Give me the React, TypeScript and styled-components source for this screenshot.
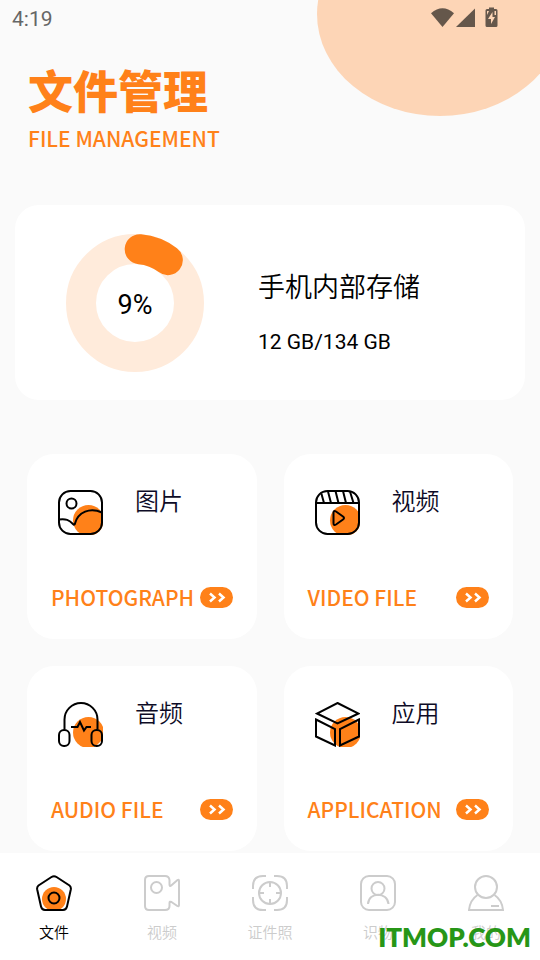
import React from "react";
import styled, { createGlobalStyle } from "styled-components";

const ORANGE = "#ff8119";

const GlobalStyle = createGlobalStyle`
  *, *::before, *::after { box-sizing: border-box; }
  body {
    margin: 0;
    background: #fafafa;
    color: #000;
    font-family: Roboto, "Noto Sans CJK SC", sans-serif;
  }
`;

const Screen = styled.div`
  position: relative;
  min-height: 100vh;
  display: flex;
  flex-direction: column;
  overflow: hidden;
`;

const Blob = styled.div`
  position: absolute;
  top: -88px;
  right: -23px;
  width: 246px;
  height: 204px;
  border-radius: 50%;
  background: #fdd5b6;
`;

const StatusBar = styled.div`
  position: relative;
  display: flex;
  justify-content: space-between;
  align-items: center;
  height: 36px;
  padding: 0 40px 0 12px;
`;

const Clock = styled.time`
  padding-top: 2px;
  font-size: 21px;
  line-height: 24px;
  color: #666;
`;

const StatusIcons = styled.div`
  display: flex;
  align-items: center;
  padding-bottom: 2px;
`;

const Header = styled.header`
  position: relative;
  padding: 28px 28px 0;
`;

const Title = styled.h1`
  margin: 0;
  font-family: "Noto Sans CJK SC", sans-serif;
  font-size: 45px;
  line-height: 52px;
  font-weight: 900;
  color: ${ORANGE};
`;

const Caption = styled.p`
  margin: 0;
  font-family: "Noto Sans CJK SC", sans-serif;
  font-size: 21px;
  line-height: 28px;
  font-weight: 500;
  color: ${ORANGE};
  white-space: nowrap;
`;

const Subtitle = styled(Caption)`
  margin-top: 8px;
`;

const Main = styled.main`
  flex: 1;
  display: flex;
  flex-direction: column;
  padding-bottom: 2px;
`;

const StorageCard = styled.section`
  display: flex;
  align-items: center;
  gap: 54px;
  margin: 53px 15px 0;
  height: 195px;
  padding: 0 51px;
  border-radius: 24px;
  background: #fff;
`;

const Gauge = styled.div`
  display: grid;
  place-items: center;
  flex: none;

  > * { grid-area: 1 / 1; }
`;

const Percent = styled.span`
  padding-top: 4px;
  font-size: 27px;
  line-height: 32px;
`;

const StorageText = styled.div`
  display: flex;
  flex-direction: column;
  gap: 20px;
  padding-top: 18px;
`;

const StorageName = styled.h2`
  margin: 0;
  font-size: 27px;
  line-height: 40px;
  font-weight: 350;
`;

const StorageAmount = styled.p`
  margin: 0;
  font-size: 21px;
  line-height: 28px;
`;

const Grid = styled.div`
  display: grid;
  grid-template-columns: repeat(2, minmax(0, 1fr));
  gap: 27px;
  margin: 54px 27px 0;
`;

const Card = styled.a`
  display: flex;
  flex-direction: column;
  justify-content: space-between;
  height: 185px;
  padding: 32px 24px 28px;
  border-radius: 27px;
  background: #fff;
  text-decoration: none;
`;

const CardTop = styled.div`
  display: flex;
  align-items: flex-start;
  gap: 32px;
  padding-left: 7px;

  svg { margin-top: 4px; }
`;

const CardTitle = styled.span`
  font-size: 24px;
  line-height: 32px;
  font-weight: 350;
  color: #0d0b26;
`;

const CardBottom = styled.div`
  display: flex;
  align-items: center;
  justify-content: space-between;
`;

const Nav = styled.nav`
  display: grid;
  grid-template-columns: repeat(5, 1fr);
  height: 107px;
  background: #fff;
`;

const NavItem = styled.a<{ $active?: boolean }>`
  display: flex;
  flex-direction: column;
  align-items: center;
  gap: 11px;
  padding-top: 22px;
  font-size: 15px;
  line-height: 22px;
  font-weight: 350;
  text-decoration: none;
  color: ${(p) => (p.$active ? "#000" : "#ccc")};
`;

const Watermark = styled.div`
  position: absolute;
  right: 9px;
  bottom: 5px;
  font-family: Lato, sans-serif;
  font-size: 26px;
  line-height: 36px;
  font-weight: 800;
  color: #279617;
  pointer-events: none;
`;

function SystemIcons() {
  return (
    <svg width="70" height="22" viewBox="0 0 70 22" fill="#65574b" aria-hidden="true">
      <path d="M1 7.200Q12.500-2.600 24 7.200L12.500 21Z" />
      <path d="M26 21 45 2.500V21Z" />
      <path
        fillRule="evenodd"
        d="M59 1.500h5V3h2q1.500 0 1.500 1.500v15q0 1.500-1.500 1.500h-9q-1.500 0-1.500-1.500v-15Q55.500 3 57 3h2ZM62.500 6l-4.500 7h3v5l4-7h-2.500ZM57 5v4l2-4ZM66 5h-1.500v4H66Z"
      />
    </svg>
  );
}

function Donut({ value }: { value: number }) {
  const length = 2 * Math.PI * 54;
  return (
    <svg width="138" height="138" viewBox="0 0 138 138" fill="none" strokeWidth="30" aria-hidden="true">
      <circle cx="69" cy="69" r="54" stroke="#ffebdb" />
      <circle
        cx="69"
        cy="69"
        r="54"
        stroke={ORANGE}
        strokeLinecap="round"
        strokeDasharray={`${(length * value) / 100} ${length}`}
        transform="rotate(-85 69 69)"
      />
    </svg>
  );
}

function CardSvg({ children, clip }: { children: React.ReactNode; clip: string }) {
  return (
    <svg width="45" height="45" viewBox="0 0 45 45" fill="none" stroke="#000" strokeWidth="2" aria-hidden="true">
      <clipPath id={clip}>
        <rect width="45" height="45" rx={clip === "audio" || clip === "apps" ? 0 : 12} />
      </clipPath>
      <circle cx="30.500" cy="30.500" r="15.500" fill={ORANGE} stroke="none" clipPath={`url(#${clip})`} />
      {children}
    </svg>
  );
}

function PhotoIcon() {
  return (
    <CardSvg clip="photo">
      <rect x="1" y="1" width="43" height="43" rx="11.500" />
      <circle cx="13.500" cy="13.500" r="5" />
      <path d="M1 29.500C8 28.500 11 30 15.500 34.500Q16.700 35 17 33.500C20 22 32 17 44 22.500" />
    </CardSvg>
  );
}

function VideoIcon() {
  return (
    <CardSvg clip="video">
      <rect x="1" y="1" width="43" height="43" rx="11.500" />
      <path d="M1 13H44M6.500 4 9 13M13 1.500 16 13M20.500 1 23.500 13M28 1 31 13M35 1.500 38.500 13" />
      <path d="M18.500 23v10q0 3 2.500 1.500l7-5q2-1.500 0-3l-7-5Q18.500 20 18.500 23Z" />
    </CardSvg>
  );
}

function AudioIcon() {
  return (
    <CardSvg clip="audio">
      <path d="M6.500 27.500V17.500a16.500 16.500 0 0 1 33 0v10" />
      <path d="M38 44 43 39v5Z" fill="#fff" stroke="none" />
      <rect x="1" y="28" width="10.500" height="16" rx="5" />
      <rect x="33.500" y="28" width="10.500" height="16" rx="5" />
      <path d="M13 25h6.500L22 20l4 8.500 2.500-3.500H33" />
    </CardSvg>
  );
}

function AppsIcon() {
  return (
    <CardSvg clip="apps">
      <path d="M22.500 1 43.500 11.500 22.500 21.500 2 11.500Z" />
      <path d="M1 17.500 20 27V43.500L1 34.500ZM44 17.500 25 27V43.500L44 34.500Z" />
    </CardSvg>
  );
}

function ArrowPill() {
  return (
    <svg width="33" height="21" viewBox="0 0 33 21" fill="none" aria-hidden="true">
      <rect width="33" height="21" rx="10.500" fill={ORANGE} />
      <path d="M10 6.500 14.500 10.500 10 14.500M19 6.500 23.500 10.500 19 14.500" stroke="#fff" strokeWidth="2.500" />
    </svg>
  );
}

function NavSvg({ children }: { children: React.ReactNode }) {
  return (
    <svg width="36" height="36" viewBox="0 0 36 36" fill="none" stroke="currentColor" strokeWidth="2" aria-hidden="true">
      {children}
    </svg>
  );
}

const navItems = [
  {
    label: "文件",
    icon: (
      <>
        <circle cx="18" cy="24" r="12" fill={ORANGE} stroke="none" />
        <path d="M15.500 2 2.500 10.500Q.7 12 1.200 14.500L5 31.500Q5.800 35 9 35H27Q30.200 35 31 31.500L34.800 14.500Q35.300 12 33.500 10.500L20.500 2Q18 .3 15.500 2Z" />
        <circle cx="18" cy="23" r="5.500" />
      </>
    ),
  },
  {
    label: "视频",
    icon: (
      <>
        <path d="M5 1H21Q25 1 25.500 5V9.500Q25.500 12 27.500 10.300L33.500 5Q35 4 35 6V30Q35 32 33.300 31L27.500 27Q25.500 26 25.500 28V31Q25.500 35 21 35H5Q1 35 1 31V5Q1 1 5 1Z" />
        <circle cx="12.500" cy="12.500" r="5.500" />
      </>
    ),
  },
  {
    label: "证件照",
    icon: (
      <>
        <path d="M1 14V11Q1 1 11 1h3M22 1h3q10 0 10 10v3M35 22v3q0 10-10 10h-3M14 35h-3Q1 35 1 25v-3" />
        <circle cx="18" cy="18" r="11" />
        <path d="M18 7v5M18 24v5M7 18h5M24 18h5" />
      </>
    ),
  },
  {
    label: "识物",
    icon: (
      <>
        <rect x="1" y="1" width="34" height="34" rx="8" />
        <circle cx="18" cy="13.500" r="6.500" />
        <path d="M8 29C8.500 16.500 27.500 16.500 28.500 29" />
      </>
    ),
  },
  {
    label: "我的",
    icon: (
      <>
        <circle cx="18" cy="12" r="11" />
        <path d="M9.500 20Q2 25 1 35H35Q34 25 26.500 20M23 31h8" />
      </>
    ),
  },
];

const cards = [
  { title: "图片", caption: "PHOTOGRAPH", icon: <PhotoIcon /> },
  { title: "视频", caption: "VIDEO FILE", icon: <VideoIcon /> },
  { title: "音频", caption: "AUDIO FILE", icon: <AudioIcon /> },
  { title: "应用", caption: "APPLICATION", icon: <AppsIcon /> },
];

export default function App() {
  return (
    <Screen>
      <GlobalStyle />
      <Blob />
      <StatusBar>
        <Clock>4:19</Clock>
        <StatusIcons>
          <SystemIcons />
        </StatusIcons>
      </StatusBar>
      <Header>
        <Title>文件管理</Title>
        <Subtitle>FILE MANAGEMENT</Subtitle>
      </Header>
      <Main>
        <StorageCard>
          <Gauge>
            <Donut value={9} />
            <Percent>9%</Percent>
          </Gauge>
          <StorageText>
            <StorageName>手机内部存储</StorageName>
            <StorageAmount>12 GB/134 GB</StorageAmount>
          </StorageText>
        </StorageCard>
        <Grid>
          {cards.map((card) => (
            <Card key={card.caption} href="#">
              <CardTop>
                {card.icon}
                <CardTitle>{card.title}</CardTitle>
              </CardTop>
              <CardBottom>
                <Caption as="span">{card.caption}</Caption>
                <ArrowPill />
              </CardBottom>
            </Card>
          ))}
        </Grid>
      </Main>
      <Nav>
        {navItems.map((item, i) => (
          <NavItem key={item.label} href="#" $active={i === 0} aria-current={i === 0 ? "page" : undefined}>
            <NavSvg>{item.icon}</NavSvg>
            {item.label}
          </NavItem>
        ))}
      </Nav>
      <Watermark>ITMOP.COM</Watermark>
    </Screen>
  );
}
